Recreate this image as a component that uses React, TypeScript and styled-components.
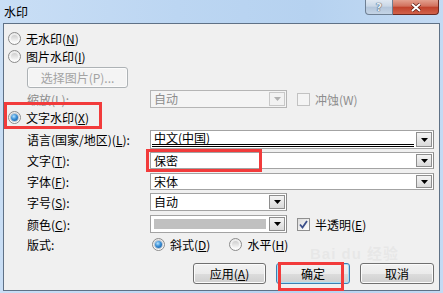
import React from "react"
import styled, { createGlobalStyle } from "styled-components"

const GlobalStyle = createGlobalStyle`
  html, body { margin: 0; padding: 0; background: #fff; }
  body {
    font-family: "Noto Sans CJK SC", "Liberation Sans", sans-serif;
    font-size: 12px;
    color: #000;
  }
  * { box-sizing: border-box; }
`

const Window = styled.div`
  width: 443px;
  height: 293px;
  display: flex;
  flex-direction: column;
  background: linear-gradient(90deg, #c9def5 0%, #bcd6f2 40%, #b6d2f0 70%, #c3daf3 100%);
  overflow: hidden;
`

const TitleBar = styled.div`
  height: 23px;
  display: flex;
  justify-content: space-between;
  align-items: flex-start;
  padding: 0 4px 0 4px;
`

const Title = styled.div`
  height: 23px;
  line-height: 23px;
  font-size: 12px;
  color: #000;
`

const CaptionBtns = styled.div`
  display: flex;
`

const CapBtn = styled.div<{ $close?: boolean }>`
  width: ${p => (p.$close ? 46 : 28)}px;
  height: 15px;
  display: flex;
  align-items: center;
  justify-content: center;
  border: 1px solid ${p => (p.$close ? "#6b2a22" : "#6e7f93")};
  border-top: none;
  border-left: ${p => (p.$close ? "none" : undefined)};
  border-radius: ${p => (p.$close ? "0 0 4px 0" : "0 0 0 4px")};
  background: ${p =>
    p.$close
      ? "linear-gradient(180deg, #e3a08f 0%, #d1705c 45%, #c0412b 50%, #d1624a 100%)"
      : "linear-gradient(180deg, #dfe8f2 0%, #c9d7e6 45%, #b3c5da 50%, #c4d4e6 100%)"};
  color: ${p => (p.$close ? "#fff" : "#e8eef5")};
  font: bold 11px "DejaVu Sans", sans-serif;
  text-shadow: 0 0 1px #34465a, 0 0 1px #34465a;
`

const Body = styled.div`
  flex: 1;
  display: flex;
  padding: 0 3px 2px 3px;
`

const Client = styled.div`
  flex: 1;
  position: relative;
  border: 1px solid #5f7186;
  background: #f0f0f0;
  display: flex;
  flex-direction: column;
  padding: 5px 5px 0 4px;
`

const OptionRow = styled.div<{ $h?: number; $mt?: number }>`
  position: relative;
  height: ${p => p.$h ?? 18}px;
  margin-top: ${p => p.$mt ?? 0}px;
  display: flex;
  align-items: center;
  gap: 5px;
`

const FieldRow = styled.div<{ $h?: number; $mt?: number }>`
  height: ${p => p.$h ?? 17}px;
  margin-top: ${p => p.$mt ?? 0}px;
  display: grid;
  grid-template-columns: 123px 1fr;
  align-items: center;
  padding-left: 19px;
`

const Label = styled.span<{ $disabled?: boolean }>`
  color: ${p => (p.$disabled ? "#8d8d8d" : "#000")};
  white-space: nowrap;
`

const Field = styled.div`
  position: relative;
  height: 100%;
  display: flex;
  align-items: center;
  gap: 10px;
`

const Radio = styled.span<{ $on?: boolean; $ml?: number }>`
  flex: none;
  position: relative;
  width: 13px;
  height: 13px;
  margin-left: ${p => p.$ml ?? 0}px;
  border-radius: 50%;
  border: 1px solid #8b8b8b;
  background: linear-gradient(180deg, #eaeaea, #fdfdfd);
  &::after {
    content: "";
    position: absolute;
    inset: 2px;
    border-radius: 50%;
    background: ${p =>
      p.$on
        ? "radial-gradient(circle at 40% 35%, #b5e3ff 0%, #3a8fd6 45%, #0f4f92 100%)"
        : "linear-gradient(180deg, #cfcfcf, #f7f7f7)"};
    box-shadow: ${p => (p.$on ? "0 0 0 1px #b9c4d0" : "none")};
  }
`

const Check = styled.span<{ $disabled?: boolean }>`
  flex: none;
  width: 13px;
  height: 13px;
  border: 1px solid ${p => (p.$disabled ? "#c2c2c2" : "#8f8f8f")};
  background: ${p => (p.$disabled ? "#f4f4f4" : "linear-gradient(135deg, #dcdcdc, #ffffff)")};
  display: flex;
  align-items: center;
  justify-content: center;
`

const CheckLabel = styled.span<{ $disabled?: boolean }>`
  margin-left: -5px;
  color: ${p => (p.$disabled ? "#8d8d8d" : "#000")};
  white-space: nowrap;
`

const PlainBtn = styled.div<{ $w: number; $primary?: boolean; $disabled?: boolean }>`
  position: relative;
  width: ${p => p.$w}px;
  height: 21px;
  display: flex;
  align-items: center;
  justify-content: center;
  border: 1px solid ${p => (p.$disabled ? "#adb2b5" : p.$primary ? "#3c7fb1" : "#707070")};
  border-radius: 3px;
  background: ${p =>
    p.$disabled
      ? "#f4f4f4"
      : "linear-gradient(180deg, #f2f2f2 0%, #ebebeb 50%, #dddddd 51%, #cfcfcf 100%)"};
  box-shadow: ${p => (p.$primary ? "inset 0 0 0 1px #a6e0f8" : "inset 0 0 0 1px #fbfbfb")};
  color: ${p => (p.$disabled ? "#a3a3a3" : "#000")};
`

const Combo = styled.div<{ $w?: number; $disabled?: boolean }>`
  flex: ${p => (p.$w ? "none" : "1")};
  width: ${p => (p.$w ? `${p.$w}px` : "auto")};
  height: 100%;
  display: flex;
  border: 1px solid ${p => (p.$disabled ? "#b5b5b5" : "#a3a3a3")};
  border-right-color: ${p => (p.$disabled ? "#b5b5b5" : "#8a8a8a")};
  background: ${p => (p.$disabled ? "#f4f4f4" : "#fff")};
  padding: 1px;
`

const ComboText = styled.div<{ $disabled?: boolean; $underline?: boolean }>`
  flex: 1;
  display: flex;
  align-items: center;
  padding-left: 2px;
  color: ${p => (p.$disabled ? "#8d8d8d" : "#000")};
  border-bottom: ${p => (p.$underline ? "3px double #000" : "none")};
  margin-right: ${p => (p.$underline ? 2 : 0)}px;
  line-height: 1;
`

const Swatch = styled.div`
  flex: 1;
  margin: 2px 3px 2px 2px;
  background: #c0c0c0;
`

const DropBtn = styled.div<{ $disabled?: boolean }>`
  flex: none;
  width: 16px;
  display: flex;
  align-items: center;
  justify-content: center;
  border: 1px solid ${p => (p.$disabled ? "#c8c8c8" : "#8e8e8e")};
  background: ${p => (p.$disabled ? "#f2f2f2" : "linear-gradient(180deg, #f4f4f4, #dadada)")};
`

const Highlight = styled.div<{ $l: number; $t: number; $w: number; $h: number }>`
  position: absolute;
  left: ${p => p.$l}px;
  top: ${p => p.$t}px;
  width: ${p => p.$w}px;
  height: ${p => p.$h}px;
  border: 3px solid #f23b3b;
  pointer-events: none;
`

const ButtonBar = styled.div`
  margin-top: 11px;
  display: flex;
  justify-content: flex-end;
  gap: 10px;
`

const Watermark = styled.div`
  position: absolute;
  right: 40px;
  bottom: 27px;
  font: bold 15px "Liberation Sans", "Noto Sans CJK SC", sans-serif;
  color: rgba(200, 200, 200, 0.22);
  letter-spacing: 1px;
`

const Arrow = ({ disabled }: { disabled?: boolean }) => (
  <svg width="7" height="4" viewBox="0 0 7 4">
    <polygon points="0,0 7,0 3.5,4" fill={disabled ? "#b0b0b0" : "#000"} />
  </svg>
)

const Tick = () => (
  <svg width="9" height="9" viewBox="0 0 9 9">
    <path d="M1 4.5 L3.5 7.5 L8 1" stroke="#3b4f8a" strokeWidth="1.8" fill="none" />
  </svg>
)

const Acc = ({ text, k }: { text: string; k: string }) => (
  <>
    {text}(<u>{k}</u>)
  </>
)

const App = () => {
  return (
    <>
      <GlobalStyle />
      <Window>
        <TitleBar>
          <Title>水印</Title>
          <CaptionBtns>
            <CapBtn>?</CapBtn>
            <CapBtn $close>
              <svg width="12" height="9" viewBox="0 0 12 9">
                <path d="M2 1 L10 8 M10 1 L2 8" stroke="#5a1a12" strokeWidth="3.4" />
                <path d="M2 1 L10 8 M10 1 L2 8" stroke="#fff" strokeWidth="2" />
              </svg>
            </CapBtn>
          </CaptionBtns>
        </TitleBar>
        <Body>
          <Client>
            <OptionRow>
              <Radio />
              <span><Acc text="无水印" k="N" /></span>
            </OptionRow>
            <OptionRow>
              <Radio />
              <span><Acc text="图片水印" k="I" /></span>
            </OptionRow>
            <FieldRow $h={20} $mt={2}>
              <PlainBtn $w={101} $disabled>选择图片(P)...</PlainBtn>
            </FieldRow>
            <FieldRow $h={18} $mt={3}>
              <Label $disabled>缩放(L):</Label>
              <Field>
                <Combo $w={137} $disabled>
                  <ComboText $disabled>自动</ComboText>
                  <DropBtn $disabled><Arrow disabled /></DropBtn>
                </Combo>
                <Check $disabled />
                <CheckLabel $disabled>冲蚀(W)</CheckLabel>
              </Field>
            </FieldRow>
            <OptionRow>
              <Radio $on />
              <span><Acc text="文字水印" k="X" /></span>
              <Highlight $l={-4} $t={-6} $w={98} $h={27} />
            </OptionRow>
            <FieldRow $mt={4}>
              <Label><Acc text="语言(国家/地区)" k="L" />:</Label>
              <Field>
                <Combo>
                  <ComboText $underline>中文(中国)</ComboText>
                  <DropBtn><Arrow /></DropBtn>
                </Combo>
              </Field>
            </FieldRow>
            <FieldRow $mt={5}>
              <Label><Acc text="文字" k="T" />:</Label>
              <Field>
                <Combo>
                  <ComboText>保密</ComboText>
                  <DropBtn><Arrow /></DropBtn>
                </Combo>
                <Highlight $l={-4} $t={-3} $w={116} $h={23} />
              </Field>
            </FieldRow>
            <FieldRow $mt={4}>
              <Label><Acc text="字体" k="F" />:</Label>
              <Field>
                <Combo>
                  <ComboText>宋体</ComboText>
                  <DropBtn><Arrow /></DropBtn>
                </Combo>
              </Field>
            </FieldRow>
            <FieldRow $h={18} $mt={3}>
              <Label><Acc text="字号" k="S" />:</Label>
              <Field>
                <Combo $w={137}>
                  <ComboText>自动</ComboText>
                  <DropBtn><Arrow /></DropBtn>
                </Combo>
              </Field>
            </FieldRow>
            <FieldRow $h={18} $mt={4}>
              <Label><Acc text="颜色" k="C" />:</Label>
              <Field>
                <Combo $w={137}>
                  <Swatch />
                  <DropBtn><Arrow /></DropBtn>
                </Combo>
                <Check><Tick /></Check>
                <CheckLabel><Acc text="半透明" k="E" /></CheckLabel>
              </Field>
            </FieldRow>
            <FieldRow $h={16} $mt={3}>
              <Label>版式:</Label>
              <Field>
                <Radio $on $ml={2} />
                <CheckLabel><Acc text="斜式" k="D" /></CheckLabel>
                <Radio $ml={9} />
                <CheckLabel><Acc text="水平" k="H" /></CheckLabel>
              </Field>
            </FieldRow>
            <ButtonBar>
              <PlainBtn $w={73}><Acc text="应用" k="A" /></PlainBtn>
              <PlainBtn $w={74} $primary>
                确定
                <Highlight $l={1} $t={-2} $w={66} $h={29} />
              </PlainBtn>
              <PlainBtn $w={74}>取消</PlainBtn>
            </ButtonBar>
            <Watermark>Bai du 经验</Watermark>
          </Client>
        </Body>
      </Window>
    </>
  )
}

export default App
